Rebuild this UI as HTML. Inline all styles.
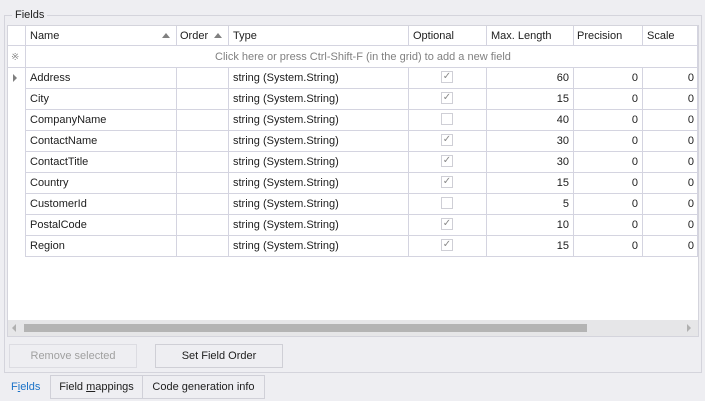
<!DOCTYPE html>
<html><head><style>
*{box-sizing:border-box;margin:0;padding:0}
body{width:705px;height:401px;background:#eeeef2;font-family:"Liberation Sans",Tahoma,sans-serif;font-size:11px;color:#202020;position:relative;overflow:hidden}
.a{position:absolute}
.grp{left:4px;top:15px;width:698px;height:358px;border:1px solid #d4d4dc}
.leg{left:12px;top:9px;background:#eeeef2;padding:0 3px;font-size:11px;line-height:13px}
.grid{left:7px;top:25px;width:692px;height:312px;background:#fff;border:1px solid #d4d4dc}
.hl{position:absolute;height:1px;background:#d4d4e0}
.vl{position:absolute;width:1px;background:#d4d4e0}
.t{position:absolute;white-space:nowrap;line-height:21px;margin-top:1px}
.h{margin-top:2px}
.r{text-align:right}
.cb{position:absolute;width:12px;height:12px;border:1px solid #cfcfd6;background:#fff;font-size:10px;line-height:10px;text-align:center;color:#8a8a8a}
.btn{position:absolute;height:24px;border:1px solid #cfcfd6;background:#eeeef2;text-align:center;line-height:23px}
.tab{position:absolute;top:375px;height:24px;border:1px solid #d0d0d8;background:#eeeef2;line-height:23px;text-align:center}
</style></head><body>
<div class="a grp"></div>
<div class="a leg">Fields</div>
<div class="a grid"></div>
<div class="hl" style="left:8px;top:45px;width:690px"></div>
<div class="hl" style="left:8px;top:67px;width:690px"></div>
<div class="hl" style="left:25px;top:88px;width:673px"></div>
<div class="hl" style="left:25px;top:109px;width:673px"></div>
<div class="hl" style="left:25px;top:130px;width:673px"></div>
<div class="hl" style="left:25px;top:151px;width:673px"></div>
<div class="hl" style="left:25px;top:172px;width:673px"></div>
<div class="hl" style="left:25px;top:193px;width:673px"></div>
<div class="hl" style="left:25px;top:214px;width:673px"></div>
<div class="hl" style="left:25px;top:235px;width:673px"></div>
<div class="hl" style="left:25px;top:256px;width:673px"></div>
<div class="vl" style="left:25px;top:26px;height:230px"></div>
<div class="vl" style="left:176px;top:26px;height:19px"></div><div class="vl" style="left:176px;top:67px;height:189px"></div>
<div class="vl" style="left:228px;top:26px;height:19px"></div><div class="vl" style="left:228px;top:67px;height:189px"></div>
<div class="vl" style="left:408px;top:26px;height:19px"></div><div class="vl" style="left:408px;top:67px;height:189px"></div>
<div class="vl" style="left:486px;top:26px;height:19px"></div><div class="vl" style="left:486px;top:67px;height:189px"></div>
<div class="vl" style="left:573px;top:26px;height:19px"></div><div class="vl" style="left:573px;top:67px;height:189px"></div>
<div class="vl" style="left:642px;top:26px;height:19px"></div><div class="vl" style="left:642px;top:67px;height:189px"></div>
<div class="vl" style="left:697px;top:26px;height:230px"></div>
<div class="t h" style="left:30px;top:24px">Name</div>
<div class="a" style="left:162px;top:33px;width:0;height:0;border-left:4px solid transparent;border-right:4px solid transparent;border-bottom:5px solid #808080"></div>
<div class="t h" style="left:180px;top:24px">Order</div>
<div class="a" style="left:214px;top:33px;width:0;height:0;border-left:4px solid transparent;border-right:4px solid transparent;border-bottom:5px solid #808080"></div>
<div class="t h" style="left:233px;top:24px">Type</div>
<div class="t h" style="left:413px;top:24px">Optional</div>
<div class="t h" style="left:491px;top:24px">Max. Length</div>
<div class="t h" style="left:577px;top:24px">Precision</div>
<div class="t h" style="left:647px;top:24px">Scale</div>
<div class="t" style="left:11px;top:46px;color:#909090;font-size:10px">&#x203B;</div>
<div class="t" style="left:215px;top:46px;color:#808080">Click here or press Ctrl-Shift-F (in the grid) to add a new field</div>
<div class="a" style="left:13px;top:74px;width:0;height:0;border-top:4px solid transparent;border-bottom:4px solid transparent;border-left:4px solid #808080"></div>

<div class="t" style="left:30px;top:67px">Address</div><div class="t" style="left:233px;top:67px">string (System.String)</div><div class="cb" style="left:441px;top:71px">&#10003;</div><div class="t r" style="left:486px;top:67px;width:83px">60</div><div class="t r" style="left:573px;top:67px;width:65px">0</div><div class="t r" style="left:642px;top:67px;width:52px">0</div>
<div class="t" style="left:30px;top:88px">City</div><div class="t" style="left:233px;top:88px">string (System.String)</div><div class="cb" style="left:441px;top:92px">&#10003;</div><div class="t r" style="left:486px;top:88px;width:83px">15</div><div class="t r" style="left:573px;top:88px;width:65px">0</div><div class="t r" style="left:642px;top:88px;width:52px">0</div>
<div class="t" style="left:30px;top:109px">CompanyName</div><div class="t" style="left:233px;top:109px">string (System.String)</div><div class="cb" style="left:441px;top:113px"></div><div class="t r" style="left:486px;top:109px;width:83px">40</div><div class="t r" style="left:573px;top:109px;width:65px">0</div><div class="t r" style="left:642px;top:109px;width:52px">0</div>
<div class="t" style="left:30px;top:130px">ContactName</div><div class="t" style="left:233px;top:130px">string (System.String)</div><div class="cb" style="left:441px;top:134px">&#10003;</div><div class="t r" style="left:486px;top:130px;width:83px">30</div><div class="t r" style="left:573px;top:130px;width:65px">0</div><div class="t r" style="left:642px;top:130px;width:52px">0</div>
<div class="t" style="left:30px;top:151px">ContactTitle</div><div class="t" style="left:233px;top:151px">string (System.String)</div><div class="cb" style="left:441px;top:155px">&#10003;</div><div class="t r" style="left:486px;top:151px;width:83px">30</div><div class="t r" style="left:573px;top:151px;width:65px">0</div><div class="t r" style="left:642px;top:151px;width:52px">0</div>
<div class="t" style="left:30px;top:172px">Country</div><div class="t" style="left:233px;top:172px">string (System.String)</div><div class="cb" style="left:441px;top:176px">&#10003;</div><div class="t r" style="left:486px;top:172px;width:83px">15</div><div class="t r" style="left:573px;top:172px;width:65px">0</div><div class="t r" style="left:642px;top:172px;width:52px">0</div>
<div class="t" style="left:30px;top:193px">CustomerId</div><div class="t" style="left:233px;top:193px">string (System.String)</div><div class="cb" style="left:441px;top:197px"></div><div class="t r" style="left:486px;top:193px;width:83px">5</div><div class="t r" style="left:573px;top:193px;width:65px">0</div><div class="t r" style="left:642px;top:193px;width:52px">0</div>
<div class="t" style="left:30px;top:214px">PostalCode</div><div class="t" style="left:233px;top:214px">string (System.String)</div><div class="cb" style="left:441px;top:218px">&#10003;</div><div class="t r" style="left:486px;top:214px;width:83px">10</div><div class="t r" style="left:573px;top:214px;width:65px">0</div><div class="t r" style="left:642px;top:214px;width:52px">0</div>
<div class="t" style="left:30px;top:235px">Region</div><div class="t" style="left:233px;top:235px">string (System.String)</div><div class="cb" style="left:441px;top:239px">&#10003;</div><div class="t r" style="left:486px;top:235px;width:83px">15</div><div class="t r" style="left:573px;top:235px;width:65px">0</div><div class="t r" style="left:642px;top:235px;width:52px">0</div>

<div class="a" style="left:8px;top:320px;width:690px;height:16px;background:#e6e6e8"></div>
<div class="a" style="left:24px;top:324px;width:563px;height:8px;background:#b4b4b4"></div>
<div class="a" style="left:12px;top:324px;width:0;height:0;border-top:4px solid transparent;border-bottom:4px solid transparent;border-right:4px solid #b0b0b0"></div>
<div class="a" style="left:687px;top:324px;width:0;height:0;border-top:4px solid transparent;border-bottom:4px solid transparent;border-left:4px solid #b0b0b0"></div>

<div class="btn" style="left:9px;top:344px;width:128px;color:#a0a0a0;border-color:#dcdce2">Remove selected</div>
<div class="btn" style="left:155px;top:344px;width:128px">Set Field Order</div>

<div class="t" style="left:11px;top:376px;color:#1a72c8">F<u>i</u>elds</div>
<div class="tab" style="left:50px;width:93px">Field <u>m</u>appings</div>
<div class="tab" style="left:142px;width:123px">Code generation info</div>
</body></html>
